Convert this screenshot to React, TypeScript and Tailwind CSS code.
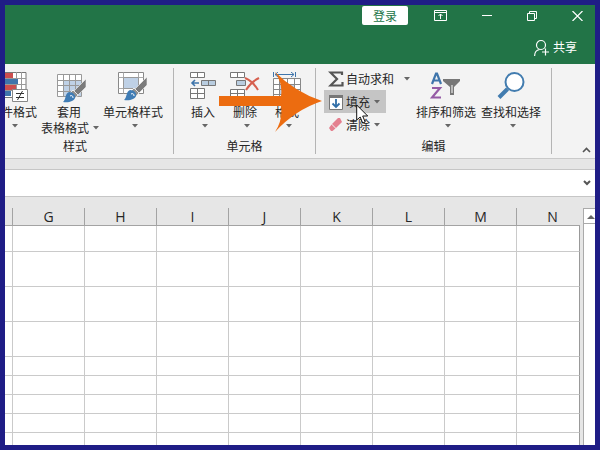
import type { ReactNode } from "react";

const columns = ["G", "H", "I", "J", "K", "L", "M"];

const Caret = () => (
  <svg className="shrink-0" width="6" height="4" viewBox="0 0 6 4">
    <path d="M0 0h6L3 3.5z" fill="#666" />
  </svg>
);

const Group = ({ label, className, labelClass = "", children }: { label: string; className: string; labelClass?: string; children: ReactNode }) => (
  <section className={`flex shrink-0 flex-col overflow-hidden border-r border-[#b4b4b4] ${className}`}>
    <div className="flex h-[73px] justify-end">{children}</div>
    <h2 className={`text-center leading-4 ${labelClass}`}>{label}</h2>
  </section>
);

const BigButton = ({ icon, label, className }: { icon: ReactNode; label: string; className: string }) => (
  <button className={`flex shrink-0 flex-col items-center whitespace-nowrap ${className}`}>
    <span className="flex h-9 items-start justify-center pt-1">{icon}</span>
    <span className="leading-4">{label}</span>
    <span className="flex h-3 items-center pl-1">
      <Caret />
    </span>
  </button>
);

const Brush = () => (
  <g>
    <path d="M29 5v8l-9 9-4-4z" fill="#7b7b7b" stroke="#f3f3f3" strokeWidth=".6" />
    <path d="M16 16l5 5-2.500 3-5.500-5z" fill="#909090" stroke="#fff" strokeWidth=".8" />
    <path d="M12 18c4 0 7 3 6 6-1 3-6 5-12 4 3-2 2-9 6-10z" fill="#3f7cb5" />
    <path d="M13 22c2-1 3 0 3 2" fill="none" stroke="#fff" />
  </g>
);

const ConditionalIcon = () => (
  <svg width="34" height="32" viewBox="0 0 34 32">
    <path d="M3 .5h27v25H3z" fill="#fff" stroke="#777" />
    <path d="M20.500 0v25M25.500 0v25M3 6.500h27M3 12.500h27M3 18.500h27" stroke="#999" />
    <path d="M3 1h14v5H3zM3 13h17v5H3z" fill="#cc4e4e" />
    <path d="M3 7h19v5H3zM3 19h12v5H3z" fill="#3f75ab" />
    <path d="M16.500 17.500h15v12h-15z" fill="#fff" stroke="#888" />
    <path d="M20 21.500h8M20 25.500h8M26.500 19l-5 9" stroke="#333" />
  </svg>
);

const TableStyleIcon = () => (
  <svg width="30" height="30" viewBox="0 0 30 30">
    <path d="M.5.500h24v22H.5z" fill="#fff" />
    <path d="M6.500 6.500h18v16h-18z" fill="#bfd1e6" />
    <path d="M.5.500h24v22H.5zM6.500.500v22M12.500.500v22M18.500.500v22M.5 6.500h24M.5 11.500h24M.5 17.500h24" fill="none" stroke="#999" />
    <Brush />
  </svg>
);

const CellStyleIcon = () => (
  <svg width="30" height="30" viewBox="0 0 30 30">
    <path d="M.5.5h25v21H.5z" fill="#fff" stroke="#888" />
    <path d="M5.500.5v21M20.500.5v21M.5 5.500h25M.5 16.500h25" stroke="#aaa" />
    <path d="M5.500 5.500h15v11h-15z" fill="#bfd1e6" stroke="#999" />
    <Brush />
  </svg>
);

const InsertIcon = () => (
  <svg width="26" height="28" viewBox="0 0 26 28">
    <path d="M.5.5h14v5H.5zM7.500.5v5M.5 16.500h14v10H.5zM7.500 16.500v10M.5 21.500h14" fill="#fff" stroke="#777" />
    <path d="M11.500 8.500h14v5h-14zM18.500 8.500v5" fill="#b9cde0" stroke="#777" />
    <path d="M9 11H2M5 8l-3 3 3 3" fill="none" stroke="#3f75ab" strokeWidth="1.600" />
  </svg>
);

const DeleteIcon = () => (
  <svg width="30" height="28" viewBox="0 0 30 28">
    <path d="M.5.5h14v5H.5zM7.500.5v5M.5 17.500h14v9H.5zM7.500 17.500v9M.5 21.500h14" fill="#fff" stroke="#777" />
    <path d="M6.500 8.500h9v5h-9z" fill="#b9cde0" stroke="#777" />
    <path d="M15 6c5 2 10 7 13 12M29 6c-6 3-10 7-13 12" fill="none" stroke="#d6604f" strokeWidth="2" />
  </svg>
);

const FormatIcon = () => (
  <svg width="28" height="28" viewBox="0 0 28 28">
    <path d="M.5 0v5M22.500 0v5M2 2.500h19M5 0L2 2.500 5 5M18 0l3 2.500L18 5" fill="none" stroke="#3f75ab" />
    <path d="M.5 7.500h27v20H.5z" fill="#fff" />
    <path d="M6.500 12.500h15v10h-15z" fill="#bfd1e6" />
    <path d="M.5 6.500h27v21H.5zM6.500 6.500v21M14.500 6.500v21M21.500 6.500v21M.5 12.500h27M.5 17.500h27M.5 22.500h27" fill="none" stroke="#888" />
  </svg>
);

const SortFilterIcon = () => (
  <svg width="32" height="30" viewBox="0 0 32 30">
    <path d="M2 12L6 1.500h1L11 12M3.500 8.500h6" fill="none" stroke="#3f75ab" strokeWidth="2.200" />
    <path d="M2 16h8L2 25.500h9" fill="none" stroke="#955ba5" strokeWidth="2.200" />
    <path d="M13 7h17v2l-6 6v8h-4v-8l-7-6z" fill="#777" />
    <path d="M21.500 13h1v8h-1z" fill="#fff" />
  </svg>
);

const FindIcon = () => (
  <svg width="28" height="28" viewBox="0 0 28 28">
    <circle cx="17.500" cy="10" r="9" fill="#fff" stroke="#427caf" strokeWidth="2" />
    <path d="M10.500 17L2 25.500" stroke="#427caf" strokeWidth="4" />
  </svg>
);

const SigmaIcon = () => (
  <svg width="16" height="16" viewBox="0 0 16 16">
    <path d="M14 4V1.500H2.500L9 8l-6.500 6.500H14.500V11" fill="none" stroke="#555" strokeWidth="2.200" />
  </svg>
);

const FillIcon = () => (
  <svg width="16" height="16" viewBox="0 0 16 16">
    <path d="M1.500 1.500h13v14h-13z" fill="#fff" stroke="#777" />
    <path d="M1 1h14v3H1z" fill="#777" />
    <path d="M8 5v8M4.500 9.500L8 13l3.500-3.500" fill="none" stroke="#2f6ea8" strokeWidth="1.800" />
  </svg>
);

const EraserIcon = () => (
  <svg width="16" height="16" viewBox="0 0 16 16">
    <path d="M10 1h2l2 4-6 6-4-4z" fill="#e4808f" />
    <path d="M3.500 7.500l4 4-3 2.500H3l-2-3z" fill="#e4808f" />
  </svg>
);

const App = () => {
  return (
    <div className="flex h-screen w-full flex-col overflow-hidden border-[5px] border-[#1f1d86] bg-white font-['Noto_Sans_CJK_SC',sans-serif] text-xs text-[#262626]">
      {/* Title bar */}
      <header className="h-[59px] shrink-0 bg-[#227447] text-white">
        <div className="flex h-5 items-center justify-end pr-3 pt-px">
          <button className="mr-[26px] h-[19px] w-[46px] rounded-xs bg-white leading-4 text-[#227447]">登录</button>
          <div className="flex items-center gap-[35px]">
            <button aria-label="功能区显示选项">
              <svg width="13" height="11" viewBox="0 0 13 11" fill="none" stroke="#fff">
                <path d="M.5.5h12v10H.5zM.5 2.500h12M6.500 9V4M4.500 6l2-2 2 2" />
              </svg>
            </button>
            <button aria-label="最小化">
              <svg width="10" height="10" viewBox="0 0 10 10">
                <path d="M0 4.500h10" stroke="#fff" />
              </svg>
            </button>
            <button aria-label="还原">
              <svg width="10" height="10" viewBox="0 0 10 10" fill="none" stroke="#fff">
                <path d="M.5 2.500h7v7h-7zM2.500 2V.5h7v7H8" />
              </svg>
            </button>
            <button aria-label="关闭">
              <svg width="11" height="10" viewBox="0 0 11 10">
                <path d="M.5 0l10 10M10.500 0l-10 10" stroke="#fff" strokeWidth="1.200" />
              </svg>
            </button>
          </div>
        </div>
        <div className="flex justify-end pr-[18px] pt-3">
          <button className="flex items-center gap-1 leading-5">
            <svg width="15" height="17" viewBox="0 0 15 17" fill="none" stroke="#fff">
              <circle cx="7" cy="6" r="4.500" strokeWidth="1.200" />
              <path d="M.6 17c0-4 2-6 5-6.500M11.500 9.500v7M8 13h7" strokeWidth="1.200" />
            </svg>
            共享
          </button>
        </div>
      </header>

      {/* Ribbon */}
      <nav className="relative flex h-[95px] shrink-0 border-b border-[#c9c9c9] bg-[#f3f3f3] pb-1 pt-1">
        <Group label="样式" className="w-[169px]" labelClass="pr-7">
          <BigButton icon={<ConditionalIcon />} label="条件格式" className="mr-1" />
          <button className="mr-1 flex shrink-0 flex-col whitespace-nowrap pt-1 text-left">
            <span className="flex h-8 items-start pl-4 pt-0.5">
              <TableStyleIcon />
            </span>
            <span className="pl-4 leading-4">套用</span>
            <span className="flex items-center gap-1 leading-4">
              表格格式
              <Caret />
            </span>
          </button>
          <BigButton icon={<CellStyleIcon />} label="单元格样式" className="mr-2.5" />
        </Group>
        <Group label="单元格" className="w-[142px]">
          <BigButton icon={<InsertIcon />} label="插入" className="w-[42px]" />
          <BigButton icon={<DeleteIcon />} label="删除" className="w-[42px]" />
          <BigButton icon={<FormatIcon />} label="格式" className="mr-[7px] w-[42px]" />
        </Group>
        <Group label="编辑" className="w-[236px]">
          <div className="flex flex-1 flex-col items-start pl-2">
            <button className="flex h-[22px] items-center gap-0.5 px-1">
              <SigmaIcon />
              自动求和
              <span className="pl-2">
                <Caret />
              </span>
            </button>
            <button className="flex h-[23px] w-[62px] items-center gap-0.5 bg-[#c5c5c5] pl-1">
              <FillIcon />
              填充
              <span className="pl-0.5">
                <Caret />
              </span>
            </button>
            <button className="flex h-[23px] items-center gap-0.5 pl-1">
              <EraserIcon />
              清除
              <span className="pl-0.5">
                <Caret />
              </span>
            </button>
          </div>
          <BigButton icon={<SortFilterIcon />} label="排序和筛选" className="mr-[5px]" />
          <BigButton icon={<FindIcon />} label="查找和选择" className="mr-2.5" />
        </Group>
        <div className="flex flex-1 items-end justify-end pb-px pr-1">
          <button aria-label="折叠功能区">
            <svg width="9" height="6" viewBox="0 0 9 6">
              <path d="M1 5l3.500-3.500L8 5" fill="none" stroke="#555" strokeWidth="1.600" />
            </svg>
          </button>
        </div>

        {/* Arrow and mouse pointer over the fill command */}
        <svg className="pointer-events-none absolute left-[214px] top-2" width="104" height="60" viewBox="0 0 104 60">
          <path d="M0 24h62Q64 12 56 0Q76 20 103 29Q76 38 56 60Q64 48 62 34H0z" fill="#ec6c10" />
        </svg>
        <svg className="pointer-events-none absolute left-[351px] top-10" width="13" height="21" viewBox="0 0 13 21">
          <path d="M.7 1v15l3.500-3 2.500 6 2.500-1-2.500-6h5z" fill="#fff" stroke="#111" />
        </svg>
      </nav>

      {/* Formula bar */}
      <div className="shrink-0 border-b border-[#c6c6c6] bg-[#e6e6e6] pt-2.5">
        <div className="flex h-[27px] items-center border-t border-[#c6c6c6] bg-white pr-1">
          <input aria-label="编辑栏" className="min-w-0 flex-1 outline-none" />
          <button aria-label="展开编辑栏">
            <svg width="8" height="6" viewBox="0 0 8 6">
              <path d="M1 1l3 3 3-3" fill="none" stroke="#555" strokeWidth="2" />
            </svg>
          </button>
        </div>
      </div>

      {/* Sheet */}
      <main className="flex min-h-0 flex-1 bg-[#e6e6e6] pt-[11px]">
        <div className="min-w-0 flex-1 overflow-hidden">
          <table className="w-full table-fixed border-separate border-spacing-0">
            <thead>
              <tr className="h-[18px] font-['Open_Sans','Noto_Sans',sans-serif] text-sm leading-4">
                <th className="w-2 border-b border-r border-[#a3a3a3] p-0" />
                {columns.map((name) => (
                  <th key={name} className="w-[72px] border-b border-r border-[#a3a3a3] p-0 pt-px font-normal">
                    {name}
                  </th>
                ))}
                <th className="border-b border-[#a3a3a3] p-0 pl-2 pt-px font-normal">N</th>
              </tr>
            </thead>
            <tbody>
              {["h-[26px]", "h-[35px]", "h-[35px]", "h-[35px]", "h-[19px]", "h-[19px]", "h-[19px]", "h-[19px]", "h-[19px]"].map((height, row) => (
                <tr key={row} className={`bg-white ${height}`}>
                  <td className="border-b border-r border-[#cacaca] p-0" />
                  {columns.map((name) => (
                    <td key={name} className="border-b border-r border-[#cacaca] p-0" />
                  ))}
                  <td className="border-b border-r border-b-[#cacaca] border-r-[#999] p-0" />
                </tr>
              ))}
            </tbody>
          </table>
        </div>
        <div className="ml-[3px] flex w-3 flex-col border-l border-[#aaa] bg-white">
          <button aria-label="向上滚动" className="flex h-4 items-center justify-center border-y border-[#aaa] pl-0.5">
            <svg width="8" height="5" viewBox="0 0 8 5">
              <path d="M0 5l4-4 4 4z" fill="#666" />
            </svg>
          </button>
        </div>
      </main>
    </div>
  );
};

export default App;
